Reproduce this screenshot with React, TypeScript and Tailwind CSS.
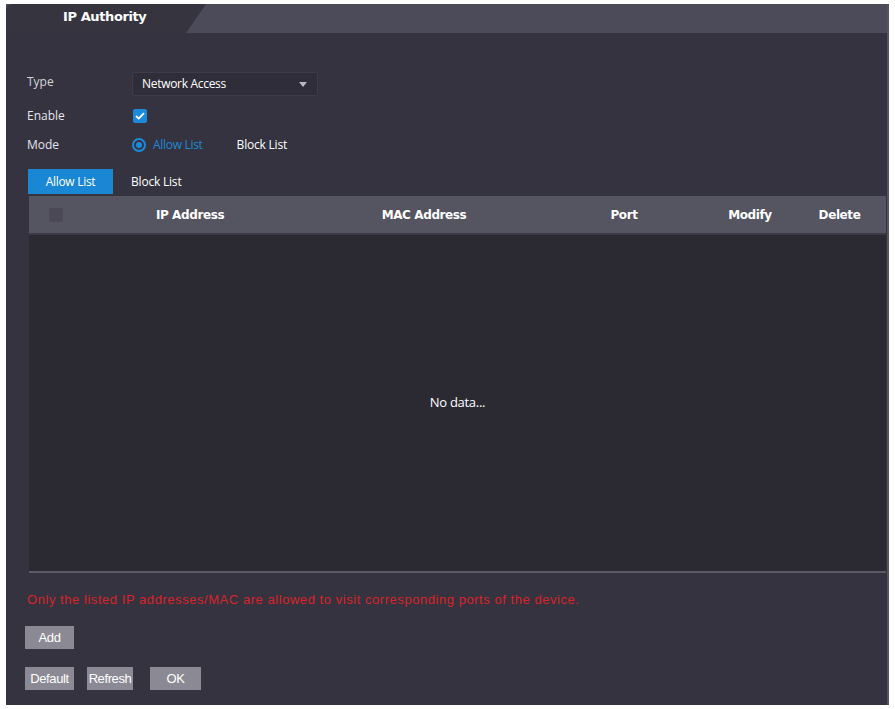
import React from 'react';

const Btn: React.FC<{ label: string; w: string; extra?: string }> = ({ label, w, extra = '' }) => (
  <button className={`${w} ${extra} h-[23px] bg-[#8b8a94] text-white text-[13px] tracking-[-0.4px] font-['Liberation_Sans',sans-serif] flex items-center justify-center`}>
    {label}
  </button>
);

const App: React.FC = () => {
  return (
    <div className="w-[895px] h-[709px] bg-white pl-[6px] pt-[4px] pr-[6px] pb-[4px] font-['Open_Sans',sans-serif]">
      <div className="h-full bg-[#34333f] border-r-[2px] border-[#55545e] flex flex-col">
        {/* tab strip */}
        <div className="h-[29px] bg-[#4c4b5a] flex">
          <div className="w-[200px] h-full bg-[#35343f] rounded-tl-[6px] [clip-path:polygon(0_0,100%_0,calc(100%-20px)_100%,0_100%)] flex items-center pl-[57px] pb-[4px]">
            <span className="text-white text-[13px] font-bold font-['DejaVu_Sans',sans-serif] tracking-[-0.4px]">IP Authority</span>
          </div>
        </div>

        <div className="pl-[21px] pr-[1px] flex flex-col">
          <div className="h-[39px]" />
          <div className="flex items-center h-[24px]">
            <span className="w-[105px] text-[12px] text-[#d6d6dc] -mt-[4px]">Type</span>
            <div className="w-[186px] h-[24px] bg-[#2e2d39] border border-[#3d3c48] rounded-[2px] flex items-center justify-between pl-[9px] pr-[10px]">
              <span className="text-[12px] text-white tracking-[-0.3px]">Network Access</span>
              <svg width="8" height="5" viewBox="0 0 8 5"><path d="M0 0h8L4 5z" fill="#b9b9c2" /></svg>
            </div>
          </div>
          <div className="flex items-center h-[29px] mt-[5px]">
            <span className="w-[106px] text-[12px] text-[#e4e4ea]">Enable</span>
            <div className="w-[14px] h-[14px] bg-[#1c8ad8] rounded-[2px] flex items-center justify-center">
              <svg width="10" height="8" viewBox="0 0 10 8"><path d="M1 4l2.7 2.6L9 1.2" stroke="white" strokeWidth="1.8" fill="none" /></svg>
            </div>
          </div>
          <div className="flex items-center h-[29px]">
            <span className="w-[105px] text-[12px] text-[#e4e4ea]">Mode</span>
            <div className="w-[14px] h-[14px] rounded-full border-[2px] border-[#1c8ad8] flex items-center justify-center">
              <div className="w-[6px] h-[6px] rounded-full bg-[#1c8ad8]" />
            </div>
            <span className="ml-[7px] text-[12px] text-[#1c8ad8] tracking-[-0.3px]">Allow List</span>
            <span className="ml-[34px] text-[12px] text-white tracking-[-0.2px]">Block List</span>
          </div>

          {/* list tabs */}
          <div className="flex items-center h-[25px] mt-[10px]">
            <div className="w-[85px] h-full ml-[1px] bg-[#1a87d4] flex items-center justify-center text-[12px] text-white tracking-[-0.3px]">
              Allow List
            </div>
            <span className="ml-[18px] text-[12px] text-white tracking-[-0.2px]">Block List</span>
          </div>

          {/* table */}
          <div className="ml-[2px] mt-[2px] flex flex-col border-b-[2px] border-[#5a5966]">
            <div className="h-[37px] bg-[#555461] flex items-center text-[12px] text-white font-bold font-['DejaVu_Sans',sans-serif] tracking-[-0.4px]">
              <div className="w-[54px] flex justify-center">
                <div className="w-[14px] h-[14px] bg-[#4a4955] rounded-[2px]" />
              </div>
              <div className="w-[214px] text-center">IP Address</div>
              <div className="w-[254px] text-center">MAC Address</div>
              <div className="w-[146px] text-center">Port</div>
              <div className="w-[106px] text-center">Modify</div>
              <div className="flex-1 text-center pr-[10px]">Delete</div>
            </div>
            <div className="h-[338px] bg-[#2b2a33] border-t-[2px] border-[#3b3a44] flex items-center justify-center">
              <span className="text-[13px] text-white tracking-[-0.3px]">No data...</span>
            </div>
          </div>

          <div className="h-[53px] flex items-center">
            <span className="text-[13px] text-[#d9232b] font-['Liberation_Sans',sans-serif] tracking-[0.55px]">
              Only the listed IP addresses/MAC are allowed to visit corresponding ports of the device.
            </span>
          </div>
          <div className="ml-[-2px] flex">
            <Btn label="Add" w="w-[49px]" />
          </div>
          <div className="ml-[-2px] mt-[18px] flex">
            <Btn label="Default" w="w-[49px]" />
            <Btn label="Refresh" w="w-[46px]" extra="ml-[13px]" />
            <Btn label="OK" w="w-[51px]" extra="ml-[17px]" />
          </div>
        </div>
      </div>
    </div>
  );
};

export default App;
